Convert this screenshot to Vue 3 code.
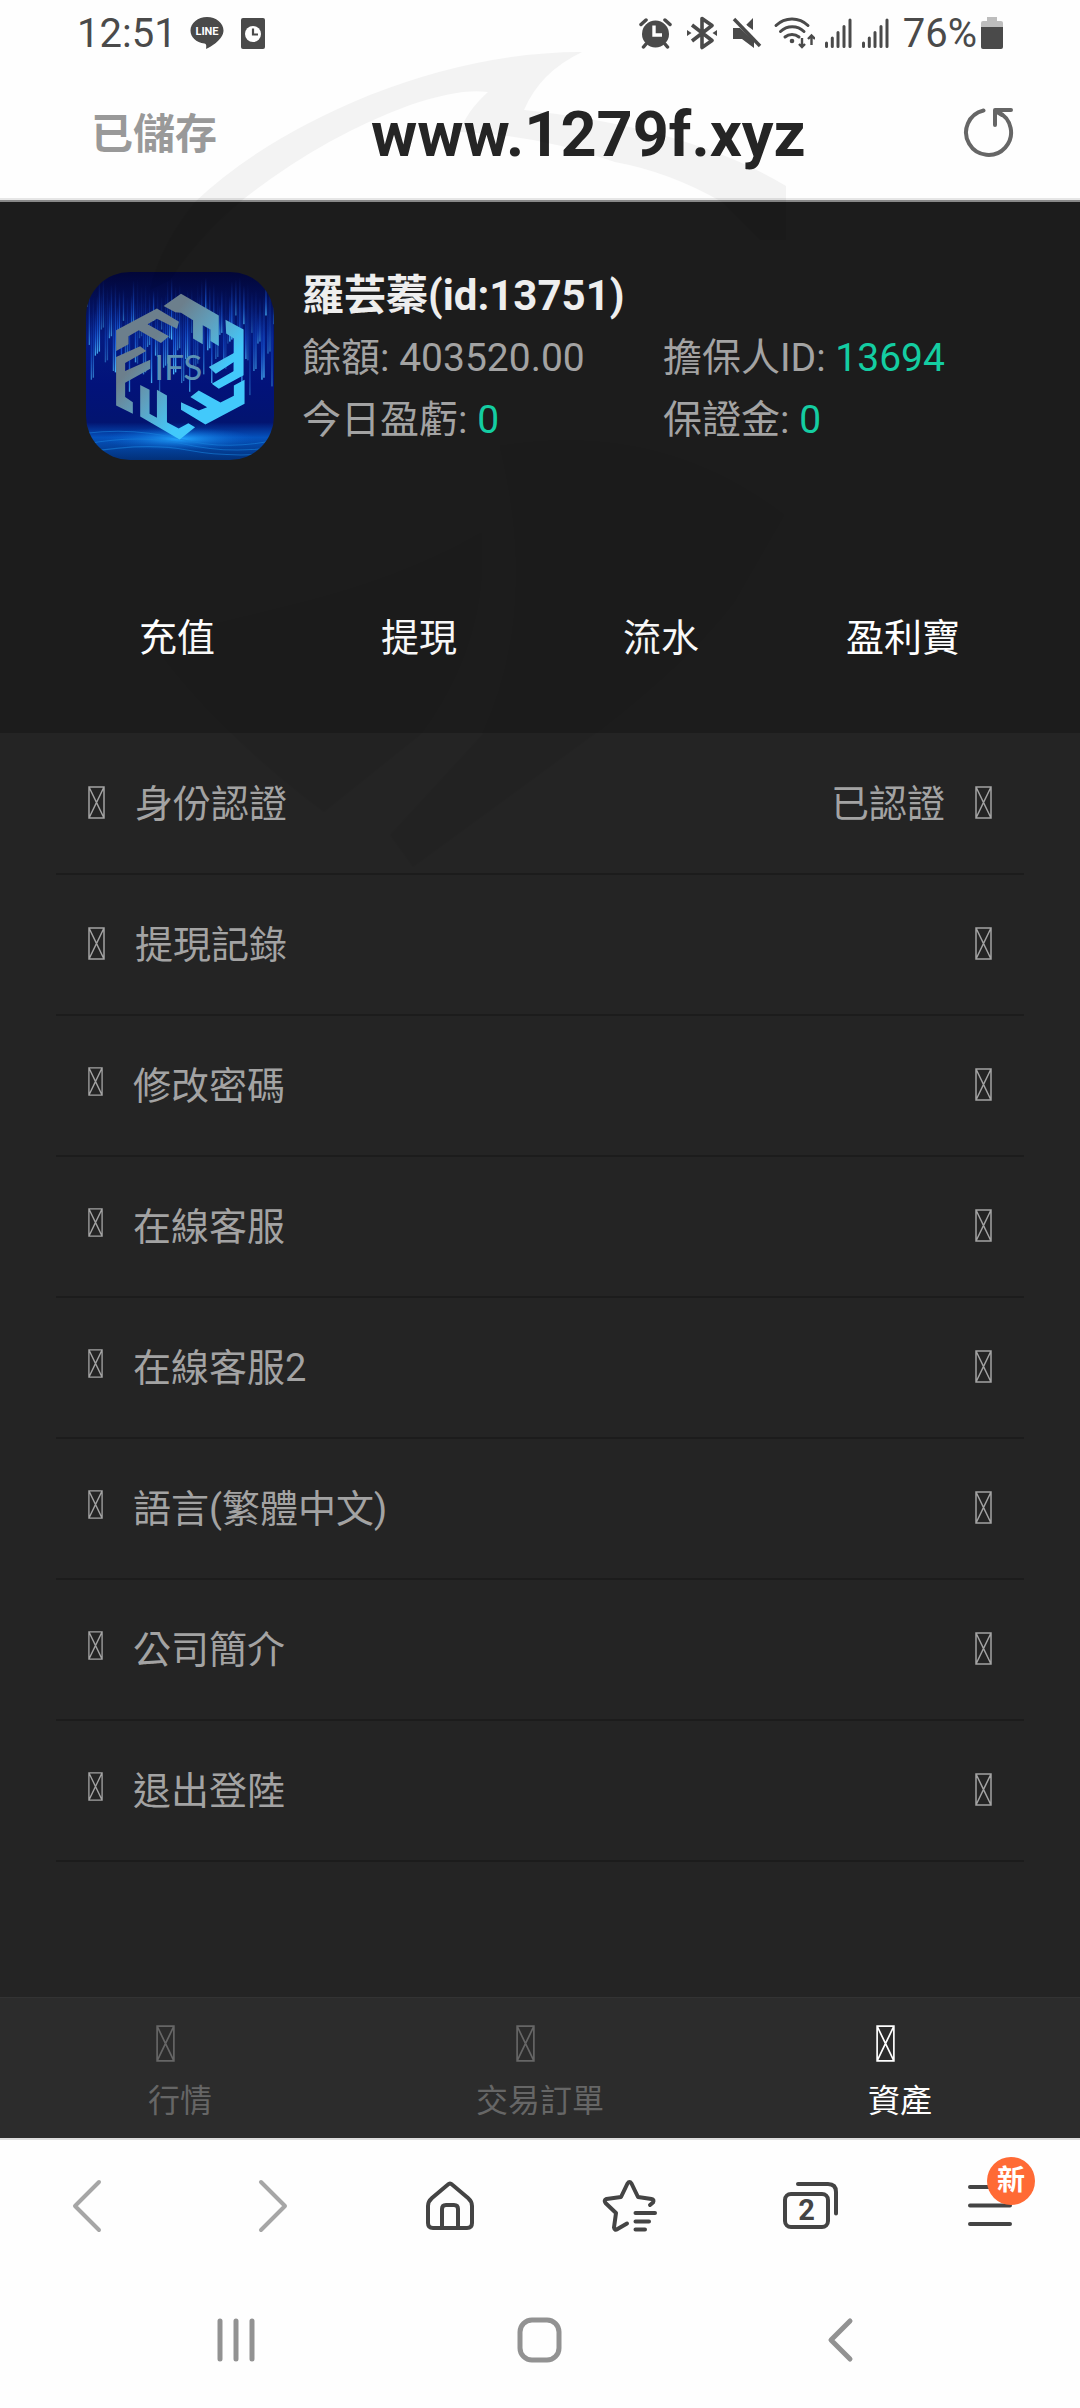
<!-- App.vue -->
<template>
    <div class="screen">
        <!-- box with a cross, shared by all glyph icons -->
        <svg class="defs" width="0" height="0" aria-hidden="true">
            <symbol id="glyph" viewBox="0 0 17 33">
                <path d="M1 1H16V32H1ZM1 1L16 32M16 1L1 32" fill="none" stroke="currentColor" stroke-width="1.5" />
            </symbol>
        </svg>

        <header class="status-bar">
            <span class="clock">12:51</span>
            <svg class="line-icon" width="34" height="34" viewBox="0 0 34 34">
                <path d="M17 1C8 1 .5 7 .5 14.500C.5 21 6 26.500 14.500 27.500C16.500 28 16.500 29.500 16 33C21 31 33.500 23 33.500 14.500C33.500 7 26 1 17 1Z" fill="#4a4a4a" />
                <text x="17" y="18.500" text-anchor="middle" font-size="11" font-weight="700" fill="#fff">LINE</text>
            </svg>
            <svg width="24" height="32" viewBox="0 0 24 32">
                <rect width="24" height="31" y="1" rx="2" fill="#4a4a4a" />
                <circle cx="12" cy="17" r="8" fill="#fff" />
                <path d="M12 11.500V17.500H17" fill="none" stroke="#4a4a4a" stroke-width="2.200" />
            </svg>

            <div class="status-icons">
                <svg width="36" height="34" viewBox="0 0 36 34">
                    <circle cx="16.500" cy="18" r="13.500" fill="#4a4a4a" />
                    <path d="M2 8.500L7 4M31 8.500L26 4M7 28L4.500 31M26 28L28.500 31" stroke="#4a4a4a" stroke-width="3.500" stroke-linecap="round" />
                    <path d="M15 9.500V19H23" fill="none" stroke="#fff" stroke-width="3.400" />
                </svg>
                <svg width="34" height="34" viewBox="-2 0 34 34">
                    <path d="M5 9L25 24.500L15 31.500V2.500L25 9.500L5 25" fill="none" stroke="#4a4a4a" stroke-width="3.600" stroke-linejoin="round" />
                    <path d="M0 14L4.500 17L0 20ZM30 14L25.500 17L30 20Z" fill="#4a4a4a" />
                </svg>
                <svg width="34" height="34" viewBox="-3 0 34 34">
                    <path d="M1 12H8L22 25V32L10 23H1ZM14 9L21 2V14Z" fill="#4a4a4a" />
                    <path d="M4 1L30 28" stroke="#fff" stroke-width="4" />
                    <path d="M2 3L28 30" stroke="#4a4a4a" stroke-width="3.400" />
                </svg>
                <svg width="42" height="34" viewBox="-1 0 42 34">
                    <path d="M2 9.500A23 23 0 0 1 34 9.500M6.500 15.500A17 17 0 0 1 30 15.500M11 21A11 11 0 0 1 25 21" fill="none" stroke="#4a4a4a" stroke-width="3" stroke-linecap="round" />
                    <circle cx="18" cy="25" r="2.300" fill="#4a4a4a" />
                    <path d="M28 22V31M25 28L28 31L31 28M37.500 29V19.500M34 23L37.500 19.500L41 23" fill="none" stroke="#4a4a4a" stroke-width="2.400" />
                </svg>
                <svg v-for="n in 2" :key="n" width="27" height="34" viewBox="0 0 27 34">
                    <path d="M1.500 27V30.500M7.300 22V30.500M13 16.500V30.500M19 10.500V30.500M25 4V30.500" stroke="#4a4a4a" stroke-width="3" stroke-linecap="round" />
                </svg>
                <span class="battery-text">76%</span>
                <svg width="22" height="34" viewBox="0 0 22 34">
                    <path d="M6 1H16V5H20A2 2 0 0 1 22 7V12H0V7A2 2 0 0 1 2 5H6Z" fill="#bdbdbd" />
                    <path d="M0 11H22V31A2 2 0 0 1 20 33H2A2 2 0 0 1 0 31Z" fill="#4a4a4a" />
                </svg>
            </div>
        </header>

        <div class="url-bar">
            <button class="saved">已儲存</button>
            <a class="address" href="#">www.1279f.xyz</a>
            <button class="reload" aria-label="Reload">
                <svg width="52" height="52" viewBox="0 0 52 52">
                    <path d="M21.500 4.500A22.500 22.500 0 1 0 36 6" fill="none" stroke="#666" stroke-width="4" stroke-linecap="round" />
                    <path d="M49 4H33V19M33.500 5L40 9" fill="none" stroke="#666" stroke-width="4" stroke-linecap="round" stroke-linejoin="round" />
                </svg>
            </button>
        </div>

        <section class="profile">
            <div class="profile-head">
                <svg class="avatar" viewBox="78 66 562 562">
                    <defs>
                        <linearGradient id="sky" x1="0" y1="0" x2="0" y2="1">
                            <stop offset="0" stop-color="#020638" />
                            <stop offset="0.35" stop-color="#041b80" />
                            <stop offset="0.6" stop-color="#02127a" />
                            <stop offset="0.8" stop-color="#021470" />
                            <stop offset="0.88" stop-color="#0552bd" />
                            <stop offset="1" stop-color="#023079" />
                        </linearGradient>
                        <linearGradient id="mark" gradientUnits="userSpaceOnUse" x1="260" y1="290" x2="430" y2="430">
                            <stop offset="0" stop-color="#6c7f8c" />
                            <stop offset="0.45" stop-color="#5f9fbd" />
                            <stop offset="1" stop-color="#42c9fb" />
                        </linearGradient>
                        <linearGradient id="ray" x1="0" y1="0" x2="0" y2="1">
                            <stop offset="0" stop-color="#1b5cf0" stop-opacity="0" />
                            <stop offset="0.6" stop-color="#1d6cf5" stop-opacity="0.7" />
                            <stop offset="1" stop-color="#4cc0ff" />
                        </linearGradient>
                        <radialGradient id="glow">
                            <stop offset="0" stop-color="#22a6ff" />
                            <stop offset="1" stop-color="#0860d0" stop-opacity="0" />
                        </radialGradient>
                    </defs>
                    <rect x="78" y="66" width="562" height="562" fill="url(#sky)" />
                    <rect
                        v-for="(ray, index) in rays"
                        :key="index"
                        :x="ray.x"
                        :y="ray.y"
                        width="4"
                        :height="ray.height"
                        :opacity="ray.opacity"
                        fill="url(#ray)"
                    />
                    <ellipse cx="358" cy="565" rx="230" ry="35" fill="url(#glow)" />
                    <path d="M78 548Q220 530 358 565T640 570M78 580Q240 550 370 580T640 590M78 605Q260 575 380 598T640 608" fill="none" stroke="#1780dc" stroke-width="3" opacity="0.6" />
                    <g fill="url(#mark)">
                        <path d="M310 168L362 131L475 196V287L450 272V238L427 225V282L398 265V210L362 188L345 186Z" />
                        <path d="M168 302V240L290 175L356 215L350 236L290 206L262 222L326 258L302 278L236 240L205 258V282Z" />
                        <path d="M168 465V320L240 288L258 302L195 338V362L270 328V355L195 397V440L218 455V490Z" />
                        <path d="M240 404L268 418V490L290 502V418L320 435V515L355 534L384 518L404 530L358 567L240 498Z" />
                        <path d="M362 455L415 480L440 470L390 440L415 420L480 456L520 436V405L552 388V460L435 522L362 478Z" />
                        <path d="M495 209L549 238V375L475 415L454 400L520 362V335L466 370L445 350L520 308V265L497 250Z" />
                    </g>
                    <text class="avatar-text" x="354" y="388" text-anchor="middle" font-size="105" fill="#5c92b4">IFS</text>
                </svg>
                <div class="info">
                    <h1>羅芸蓁(id:13751)</h1>
                    <dl class="stats">
                        <div v-for="stat in stats" :key="stat.label">
                            <dt>{{ stat.label }}: </dt>
                            <dd :class="{ green: stat.green }">{{ stat.value }}</dd>
                        </div>
                    </dl>
                </div>
            </div>
            <div class="actions">
                <button v-for="action in actions" :key="action">{{ action }}</button>
            </div>
        </section>

        <ul class="menu">
            <li v-for="(item, index) in menuItems" :key="item.label">
                <a href="#">
                    <svg class="glyph" :class="{ small: index > 1 }"><use href="#glyph" /></svg>
                    <span class="menu-label">{{ item.label }}</span>
                    <span v-if="item.state" class="menu-state">{{ item.state }}</span>
                    <svg class="glyph"><use href="#glyph" /></svg>
                </a>
            </li>
        </ul>

        <nav class="tabs">
            <button
                v-for="tab in tabs"
                :key="tab.name"
                :class="{ active: activeTab === tab.name }"
                @click="activeTab = tab.name"
            >
                <i><svg class="glyph large"><use href="#glyph" /></svg></i>
                <span>{{ tab.label }}</span>
            </button>
        </nav>

        <nav class="toolbar">
            <button class="muted" aria-label="Back">
                <svg viewBox="0 0 60 60"><path d="M39 6L15 30L39 54" /></svg>
            </button>
            <button class="muted" aria-label="Forward">
                <svg viewBox="0 0 60 60"><path d="M21 6L45 30L21 54" /></svg>
            </button>
            <button aria-label="Home">
                <svg viewBox="0 0 60 60">
                    <path d="M28 8.500Q30 6.500 32 8.500L48 22Q52 25.500 52 30V47Q52 52 47 52H13Q8 52 8 47V30Q8 25.500 12 22Z" />
                    <path d="M22 52V33Q22 29 26 29H34Q38 29 38 33V52" />
                </svg>
            </button>
            <button aria-label="Bookmarks">
                <svg viewBox="0 0 60 60">
                    <path d="M50 29L53 26.500Q54.500 23.500 51.500 23L38 21L31.500 7.500Q29.500 4.500 27.500 7.500L21 21L6.500 23Q3.500 24 5.500 27L16 37L14 51.500Q14.500 55 17.500 53L27 47.500" />
                    <path d="M35.500 37H55M35.500 45.500H49M35.500 53.500H45" />
                </svg>
            </button>
            <button aria-label="Tabs">
                <svg viewBox="0 0 60 60">
                    <rect x="5" y="18" width="43" height="33" rx="6" />
                    <path d="M18 8H48Q56 8 56 16V37.500" />
                    <text class="tab-count" x="26.500" y="44" text-anchor="middle">2</text>
                </svg>
            </button>
            <button aria-label="Menu">
                <svg viewBox="0 0 60 60"><path d="M10 11H50M10 29.500H50M10 48H50" /></svg>
                <span class="badge">新</span>
            </button>
        </nav>

        <nav class="system-nav">
            <button aria-label="Recent apps">
                <svg viewBox="0 0 60 60"><path d="M12 11V49M28 11V49M44 11V49" /></svg>
            </button>
            <button aria-label="Home screen">
                <svg viewBox="0 0 60 60"><rect x="10" y="10" width="39" height="40" rx="12" /></svg>
            </button>
            <button aria-label="System back">
                <svg viewBox="0 0 60 60"><path d="M38 11L19 30L38 49" /></svg>
            </button>
        </nav>

        <!-- faint swoosh lying over the page -->
        <svg class="swoosh" viewBox="0 0 1080 900" aria-hidden="true">
            <path d="M582 52Q480 52 370 95Q260 140 195 202Q160 245 150 290L170 280Q200 235 240 202Q320 138 410 105Q460 88 488 92Q466 112 460 132Q540 135 615 162Q670 172 722 202L760 240H786V186Q690 128 524 110Q540 72 582 52Z" />
            <path d="M150 640L284 607Q400 580 481 533Q490 640 420 735L324 812Q220 735 150 640ZM500 446Q540 610 482 735L390 835L413 867L600 730Q690 660 734 602L784 515Q660 420 500 446Z" opacity="0.7" />
        </svg>
    </div>
</template>

<script setup>
import { ref } from 'vue';

const activeTab = ref('assets');

const stats = [
    { label: '餘額', value: '403520.00' },
    { label: '擔保人ID', value: '13694', green: true },
    { label: '今日盈虧', value: '0', green: true },
    { label: '保證金', value: '0', green: true }
];

const actions = ['充值', '提現', '流水', '盈利寶'];

const menuItems = [
    { label: '身份認證', state: '已認證' },
    { label: '提現記錄' },
    { label: '修改密碼' },
    { label: '在線客服' },
    { label: '在線客服2' },
    { label: '語言(繁體中文)' },
    { label: '公司簡介' },
    { label: '退出登陸' }
];

const tabs = [
    { name: 'market', label: '行情' },
    { name: 'orders', label: '交易訂單' },
    { name: 'assets', label: '資產' }
];

// light rain behind the avatar mark
const rays = Array.from({ length: 100 }, (_, i) => {
    const x = 80 + ((i * 31) % 100) * 6;
    return {
        x,
        y: 80 + ((i * 47) % 110),
        height: 90 + ((i * 67) % 180),
        opacity: 0.3 + ((i * 29) % 70) / 100
    };
});
</script>

<style>
body {
    margin: 0;
    background: #fefefe;
}
</style>

<style scoped>
.screen {
    position: relative;
    display: flex;
    flex-direction: column;
    min-height: 100vh;
    background: #fefefe;
    font-family: Roboto, "Noto Sans CJK TC", sans-serif;
    font-size: 38px;
    color: #a3a3a3;
}

.defs {
    position: absolute;
}

svg {
    display: block;
    flex: none;
}

button {
    border: none;
    padding: 0;
    background: none;
    font: inherit;
    color: inherit;
    cursor: pointer;
}

a {
    color: inherit;
    text-decoration: none;
}

.status-bar {
    display: flex;
    align-items: center;
    height: 66px;
    padding: 0 77px;
    color: #4a4a4a;
    font-size: 40px;
}

.clock {
    margin-right: 13px;
}

.line-icon {
    margin-right: 17px;
}

.status-icons {
    display: flex;
    align-items: center;
    gap: 10px;
    margin-left: auto;
}

.battery-text {
    margin: 0 -6px 0 4px;
}

.url-bar {
    display: grid;
    grid-template-columns: 280px auto 1fr;
    align-items: center;
    height: 132px;
    padding: 0 66px 0 91px;
    border-bottom: 2px solid #e6e6e6;
}

.saved {
    justify-self: start;
    padding-bottom: 4px;
    font-size: 42px;
    font-weight: 700;
    color: #999;
}

.address {
    padding-top: 4px;
    font-size: 63px;
    font-weight: 700;
    color: #252525;
}

.reload {
    justify-self: end;
}

.profile {
    padding: 63px 56px 59px;
    border-top: 2px solid #888;
    background: #1c1c1c;
}

.profile-head {
    display: flex;
    gap: 28px;
    padding-left: 30px;
}

.avatar {
    width: 188px;
    height: 188px;
    margin-top: 7px;
    border-radius: 44px;
}

.avatar-text {
    font-family: Lato, sans-serif;
}

.info {
    flex: 1;
    line-height: 62px;
}

.info h1 {
    margin: 0;
    font-size: 42px;
    font-weight: 700;
    color: #eee;
}

.stats {
    display: grid;
    grid-template-columns: 1fr 1fr;
    margin: 0;
    font-size: 39px;
    white-space: pre;
}

.stats dt,
.stats dd {
    display: inline;
    margin: 0;
}

.green {
    color: #14cda2;
}

.actions {
    display: grid;
    grid-template-columns: repeat(4, 1fr);
    margin-top: 134px;
}

.actions button {
    height: 80px;
    color: #fff;
}

.menu {
    flex: 1;
    margin: 0;
    padding: 1px 56px 64px;
    background: #242424;
    list-style: none;
}

.menu a {
    display: flex;
    align-items: center;
    gap: 30px;
    height: 136px;
    padding: 0 32px 3px;
    border-bottom: 2px solid #1c1c1c;
}

.menu-label,
.menu-state {
    padding-bottom: 4px;
}

.menu-label {
    flex: 1;
}

.glyph {
    width: 17px;
    height: 33px;
}

.glyph.small {
    width: 15px;
    height: 29px;
    margin-bottom: 6px;
}

.glyph.large {
    width: 19px;
    height: 37px;
}

.tabs {
    display: grid;
    grid-template-columns: repeat(3, 1fr);
    height: 140px;
    border-top: 1px solid #333;
    border-bottom: 2px solid #ddd;
    background: #2c2c2c;
    font-size: 32px;
    color: #666;
}

.tabs button {
    display: flex;
    flex-direction: column;
    align-items: center;
    padding-top: 27px;
}

.tabs button.active {
    color: #fff;
}

.tabs i {
    width: 48px;
}

.tabs span {
    margin-top: 15px;
    line-height: 48px;
}

.toolbar {
    display: grid;
    grid-template-columns: repeat(6, 1fr);
    height: 132px;
}

.toolbar button {
    position: relative;
    display: flex;
    align-items: center;
    justify-content: center;
    color: #444;
}

.toolbar button.muted {
    color: #a6a6a6;
}

.toolbar svg,
.system-nav svg {
    width: 60px;
    height: 60px;
    fill: none;
    stroke: currentColor;
    stroke-width: 4;
    stroke-linecap: round;
    stroke-linejoin: round;
}

.toolbar .tab-count {
    fill: currentColor;
    stroke: none;
    font-size: 29px;
    font-weight: 700;
}

.badge {
    position: absolute;
    top: 17px;
    left: 50%;
    width: 48px;
    height: 48px;
    margin-left: -3px;
    border-radius: 50%;
    background: #ff6a35;
    color: #fff;
    font-size: 28px;
    font-weight: 700;
    line-height: 48px;
}

.system-nav {
    display: flex;
    align-items: center;
    justify-content: center;
    gap: 242px;
    height: 136px;
    color: #929292;
}

.system-nav svg {
    stroke-width: 5;
}

.swoosh {
    position: absolute;
    top: 0;
    left: 0;
    width: 100%;
    fill: #000;
    opacity: 0.04;
    pointer-events: none;
}
</style>
